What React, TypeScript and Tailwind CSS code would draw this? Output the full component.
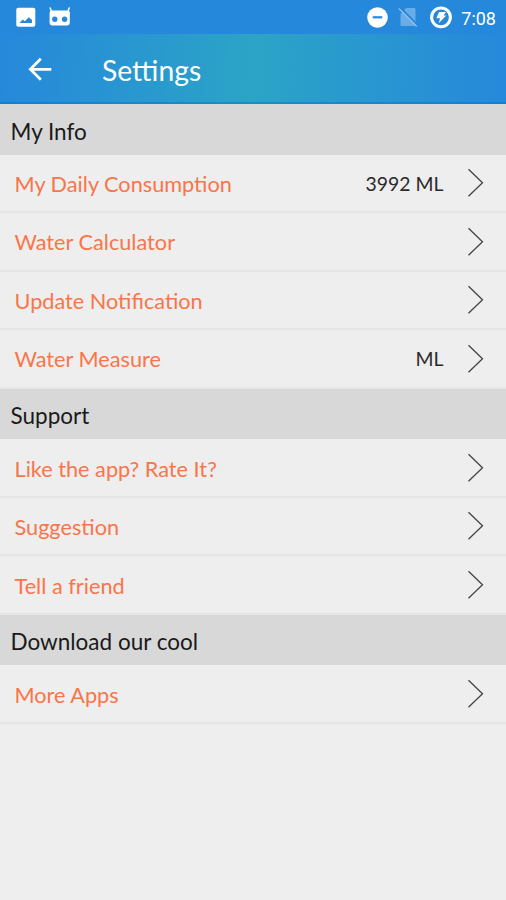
type Row = { label: string; value?: string };
type Section = { title: string; rows: Row[] };

const sections: Section[] = [
    {
        title: 'My Info',
        rows: [{ label: 'My Daily Consumption', value: '3992 ML' }, { label: 'Water Calculator' }, { label: 'Update Notification' }, { label: 'Water Measure', value: 'ML' }],
    },
    {
        title: 'Support',
        rows: [{ label: 'Like the app? Rate It?' }, { label: 'Suggestion' }, { label: 'Tell a friend' }],
    },
    {
        title: 'Download our cool',
        rows: [{ label: 'More Apps' }],
    },
];

function StatusBar() {
    return (
        <div className="flex h-[34px] items-center bg-[#2688db] pl-4 pr-[11px] text-white">
            <svg className="h-5 w-5" viewBox="0 0 20 20">
                <rect x="0.3" y="0.7" width="19" height="19" rx="2" fill="#fff" />
                <path d="M3.5 16l3.2-3.6 2.2 1.8 3.8-4L16 13v3z" fill="#2688db" />
            </svg>
            <svg className="ml-3 h-5 w-6" viewBox="0 0 24 20">
                <path d="M2.2 1l1.5 4M21.2 1l-1.5 4" stroke="#fff" strokeWidth="1.5" strokeLinecap="round" />
                <path d="M1.6 5.5a2 2 0 0 1 2-2h16.2a2 2 0 0 1 2 2v10a3 3 0 0 1-3 3H4.6a3 3 0 0 1-3-3z" fill="#fff" />
                <circle cx="6.8" cy="12.3" r="2.7" fill="#2688db" />
                <circle cx="16.6" cy="12.3" r="2.7" fill="#2688db" />
            </svg>
            <div className="flex-1" />
            <svg className="h-[22px] w-[22px]" viewBox="0 0 22 22">
                <circle cx="11.5" cy="11.5" r="10.3" fill="#fff" />
                <path d="M6.7 11.3h9.6" stroke="#2688db" strokeWidth="2.2" />
            </svg>
            <svg className="ml-2.5 h-5 w-5" viewBox="0 0 20 20">
                <path d="M8 1h8.5a1 1 0 0 1 1 1v16a1 1 0 0 1-1 1h-13a1 1 0 0 1-1-1V7z" fill="#68ace8" />
                <path d="M1.8 0l17.5 17.7" stroke="#2688db" strokeWidth="1.9" />
                <path d="M0.9 1.6l17.8 17.8" stroke="#8cc0ee" strokeWidth="1.4" />
            </svg>
            <svg className="ml-2.5 h-6 w-6" viewBox="0 0 24 24">
                <circle cx="13" cy="12.3" r="9.4" fill="none" stroke="#fff" strokeWidth="3" />
                <path d="M11 7h7l-2.4 3.6h2.7l-7.6 7.6 1.4-4.9H8.4z" fill="#fff" />
            </svg>
            <span className="-mr-px ml-[9px] mt-[3px] font-[Roboto] text-[18px] leading-none">7:08</span>
        </div>
    );
}

function TopBar() {
    return (
        <div className="flex h-[70px] items-center bg-[linear-gradient(92deg,#2688db_0%,#2ba4c6_50%,#2688db_100%)] pl-7 text-white shadow-[inset_0_-2px_0_#0078d480]">
            <svg className="h-6 w-6" viewBox="0 0 24 24" fill="none" stroke="#fff" strokeWidth="2.7">
                <path d="M12.8 1.8L2.3 12.3l10.5 10.5M2.3 12.3h21" />
            </svg>
            <h1 className="ml-[50px] mt-[3px] text-[28.3px] leading-none">Settings</h1>
        </div>
    );
}

function SettingsRow({ label, value }: Row) {
    return (
        <div className="flex h-[58.5px] items-center border-b-2 border-[#e5e5e5] pl-[14.5px] pr-[22.5px]">
            <span className="mt-1 flex-1 text-[21.7px] leading-none text-[#f9754a]">{label}</span>
            {value && <span className="mr-[23px] mt-px text-[19.4px] leading-none text-[#2a2a2a]">{value}</span>}
            <svg className="mt-px h-[30px] w-[17px]" viewBox="0 0 17 30" fill="none" stroke="#444" strokeWidth="1.3">
                <path d="M1.5 1.2L15.5 14.7 1.5 28.2" />
            </svg>
        </div>
    );
}

export default function App() {
    return (
        <div className="h-[900px] w-[506px] overflow-hidden bg-[#eee] font-[Lato,Carlito,sans-serif]">
            <StatusBar />
            <TopBar />
            {sections.map((section) => (
                <section key={section.title}>
                    <h2 className="flex h-[50.6px] items-center bg-[#d8d8d8] pl-[10.5px] pt-[5px] text-[22.5px] leading-none text-[#1a1a1a]">{section.title}</h2>
                    {section.rows.map((row) => (
                        <SettingsRow
                            key={row.label}
                            {...row}
                        />
                    ))}
                </section>
            ))}
        </div>
    );
}
